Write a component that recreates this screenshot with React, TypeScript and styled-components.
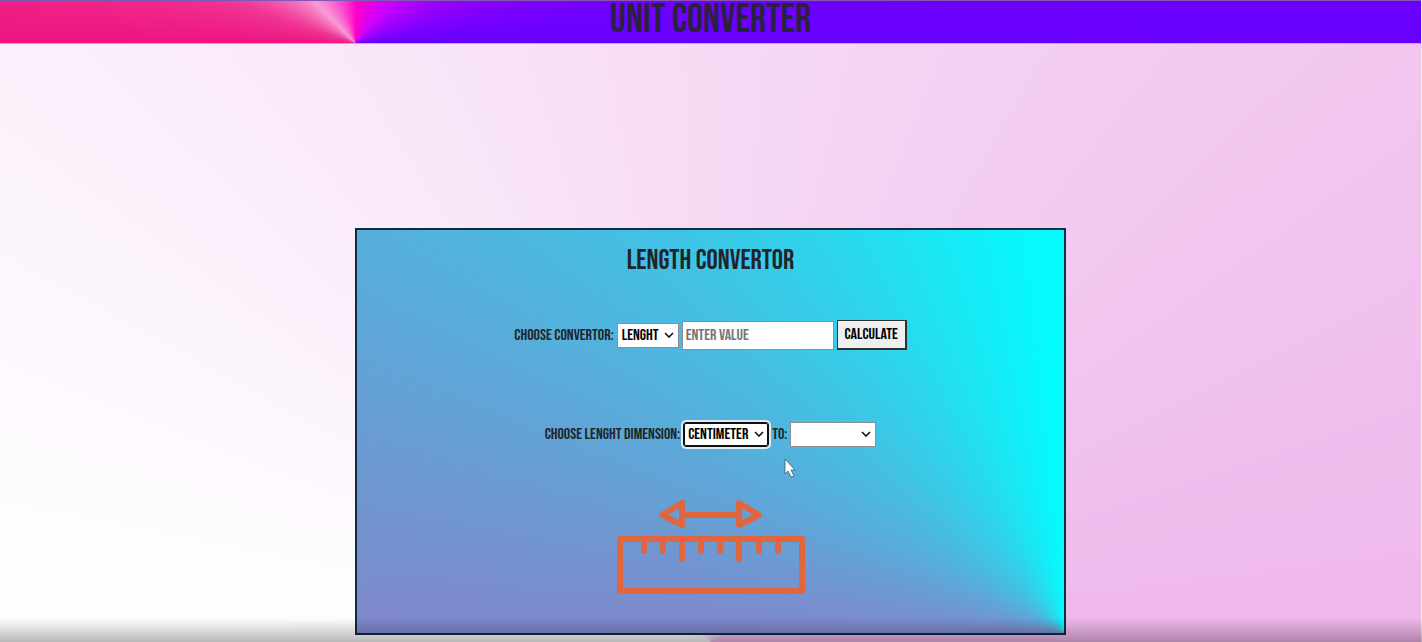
import React from 'react';
import styled, { createGlobalStyle } from 'styled-components';

const GlobalStyle = createGlobalStyle`
  * { box-sizing: border-box; }
  body {
    margin: 0;
    color: #212529;
    font-family: 'Bebas Neue', 'Liberation Sans Narrow', 'Liberation Sans', sans-serif;
  }
`;

const Page = styled.div`
  min-height: 100vh;
  padding-bottom: 7px;
  border-right: 1px solid #f8e8f6;
  background: conic-gradient(
    from 270deg at 50% 100%,
    #ffffff 0deg,
    #fdf9fe 20deg,
    #f6daf4 90deg,
    #f1c8f0 135deg,
    #efb7eb 180deg,
    #efb7eb 270deg,
    #ffffff 360deg
  );
`;

const Header = styled.header`
  padding-bottom: 4px;
  border-top: 1px solid #8358b4;
  border-bottom: 1px solid #d9a0ea;
  background: conic-gradient(
    from 270deg at 25% 100%,
    #ee1480 0deg,
    #f03593 18deg,
    #f99bd6 46deg,
    #ff00c8 92deg,
    #cc00ff 132deg,
    #9000ff 160deg,
    #6e00ff 174deg,
    #6800ff 180deg,
    #ee1480 360deg
  );
`;

const Title = styled.h1`
  margin: 0;
  font-size: 40px;
  font-weight: 500;
  line-height: 38px;
  text-align: center;
  color: #2b2140;
`;

const Card = styled.main`
  position: relative;
  display: flex;
  flex-direction: column;
  align-items: center;
  width: 50%;
  margin: 184px auto 0;
  padding: 15px 0 38px;
  border: 2px solid #0c2c40;
  background: conic-gradient(from 270deg at 100% 100%, #8087ca 0deg, #00ffff 90deg, #8087ca 360deg);
`;

const CardTitle = styled.h2`
  margin: 0 0 43px;
  font-size: 28px;
  font-weight: 500;
  line-height: 32px;
`;

const Row = styled.div<{ $gapBelow: number }>`
  display: flex;
  align-items: center;
  justify-content: center;
  gap: 3px;
  height: 30px;
  margin-bottom: ${(p) => p.$gapBelow}px;
  font-size: 16px;
  white-space: nowrap;
`;

const SelectBox = styled.span<{ $width: number }>`
  position: relative;
  display: flex;
  align-items: center;
  width: ${(p) => p.$width}px;
`;

const Select = styled.select<{ $focused?: boolean }>`
  appearance: none;
  width: 100%;
  height: 25px;
  padding: 0 4px;
  border: 1px solid ${(p) => (p.$focused ? '#101010' : '#8a8f94')};
  border-radius: ${(p) => (p.$focused ? 3 : 0)}px;
  outline: ${(p) => (p.$focused ? '1px solid #101010' : 'none')};
  outline-offset: -2px;
  box-shadow: ${(p) => (p.$focused ? '0 0 0 2px #d9eef8' : 'none')};
  background: #fff;
  color: #000;
  font: inherit;
`;

const Chevron = styled.svg`
  position: absolute;
  right: 5px;
  width: 10px;
  height: 6px;
  pointer-events: none;
`;

const ValueInput = styled.input`
  width: 152px;
  height: 29px;
  padding: 0 3px;
  border: 1px solid #8a8f94;
  background: #fff;
  font: inherit;
  &::placeholder { color: #757575; opacity: 1; }
`;

const Button = styled.button`
  width: 70px;
  height: 30px;
  padding: 0;
  border: 2px solid #303030;
  border-width: 1px 2px 2px 1px;
  background: #efefef;
  color: #000;
  font: inherit;
`;

const Ruler = styled.svg`
  display: block;
  width: 190px;
  height: 96px;
`;

const Pointer = styled.svg`
  position: absolute;
  top: 228px;
  left: calc(50% + 73px);
  width: 12px;
  height: 20px;
  pointer-events: none;
`;

const BottomShade = styled.div`
  position: fixed;
  right: 0;
  bottom: 0;
  left: 0;
  height: 24px;
  background: linear-gradient(transparent, rgba(0, 0, 0, 0.27));
  pointer-events: none;
`;

type PickerProps = { id: string; width: number; options: string[]; focused?: boolean };

function Picker({ id, width, options, focused }: PickerProps) {
  return (
    <SelectBox $width={width}>
      <Select id={id} $focused={focused} defaultValue={options[0]}>
        {options.map((option) => (
          <option key={option} value={option}>{option}</option>
        ))}
      </Select>
      <Chevron viewBox="0 0 10 6" fill="none" stroke="#111" strokeWidth="1.6" aria-hidden="true">
        <path d="M1 1l4 4 4-4" />
      </Chevron>
    </SelectBox>
  );
}

export default function App() {
  return (
    <Page>
      <GlobalStyle />
      <Header>
        <Title>UNIT CONVERTER</Title>
      </Header>
      <Card>
        <CardTitle>LENGTH CONVERTOR</CardTitle>
        <Row $gapBelow={69}>
          <label htmlFor="convertor">CHOOSE CONVERTOR:</label>
          <Picker id="convertor" width={62} options={['LENGHT']} />
          <ValueInput type="text" placeholder="ENTER VALUE" aria-label="ENTER VALUE" />
          <Button type="button">CALCULATE</Button>
        </Row>
        <Row $gapBelow={50}>
          <label htmlFor="from-unit">CHOOSE LENGHT DIMENSION:</label>
          <Picker id="from-unit" width={86} options={['CENTIMETER']} focused />
          <label htmlFor="to-unit">TO:</label>
          <Picker id="to-unit" width={86} options={['']} />
        </Row>
        <Ruler viewBox="0 0 190 96" fill="none" stroke="#df663f" strokeWidth="6" strokeLinecap="round" strokeLinejoin="round" aria-hidden="true">
          <path d="M66 16H123" />
          <path d="M66 4V26L46 16ZM123 4V26L143 16Z" />
          <rect x="4" y="40" width="182" height="52" />
          <path d="M28 41V52M47 41V52M66 41V60M85 41V52M104 41V52M123 41V60M143 41V52M162 41V52" />
        </Ruler>
        <Pointer viewBox="0 0 12 20" aria-hidden="true">
          <path d="M1 1V16L4 13L7 19L10 18L7 12H11Z" fill="#fff" stroke="#34495c" strokeWidth="0.7" />
        </Pointer>
      </Card>
      <BottomShade />
    </Page>
  );
}
